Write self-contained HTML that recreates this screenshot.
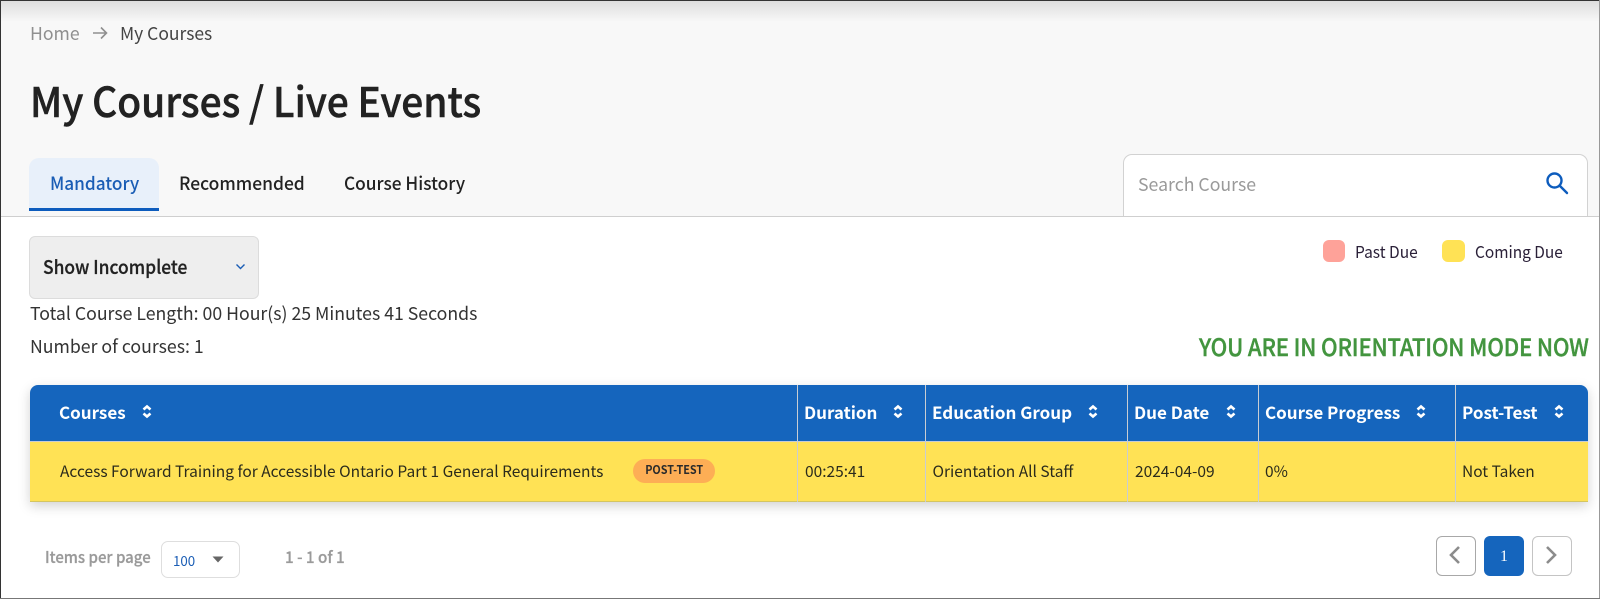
<!DOCTYPE html>
<html><head><meta charset="utf-8">
<style>
html,body{margin:0;padding:0;width:1600px;height:599px;overflow:hidden;background:#fff}
body{position:relative;font-family:"Noto Sans CJK JP","Liberation Sans",sans-serif;color:#222}
.a{position:absolute;white-space:nowrap}
.t{position:absolute;white-space:nowrap;line-height:24px;height:24px;transform-origin:0 50%}
.h{font-weight:700;font-size:17px;color:#fff}
.r{font-size:15.5px;color:#2b2b1c}
.d{position:absolute;width:1px;background:#c9cdd2}
svg{position:absolute;display:block}
</style></head><body>
<div class="a" style="left:0;top:0;width:1600px;height:216px;background:#f8f8f8"></div>
<div class="a" style="left:0;top:0;width:1600px;height:22px;background:linear-gradient(#dcdcdc,#f8f8f8)"></div>

<div class="t" style="left:30px;top:21px;font-size:18px;color:#8f8f8f;transform:scaleX(.98)">Home</div>
<svg style="left:92px;top:26px" width="16" height="14" viewBox="0 0 16 14" fill="none" stroke="#8f8f8f" stroke-width="1.6"><path d="M1 7H14.5M9 1.5L14.5 7L9 12.5"/></svg>
<div class="t" style="left:120px;top:21px;font-size:18px;color:#444;transform:scaleX(.97)">My Courses</div>
<div class="t" style="left:30px;top:69px;height:60px;line-height:60px;font-size:41px;font-weight:500;color:#222;-webkit-text-stroke:.5px #222;transform:scaleX(.948)">My Courses / Live Events</div>

<div class="a" style="left:29px;top:158px;width:130px;height:50px;background:#e8f0fa;border-radius:10px 10px 0 0"></div>
<div class="a" style="left:29px;top:208px;width:130px;height:3px;background:#0d5cbd"></div>
<div class="t" style="left:50px;top:171px;font-size:18px;font-weight:500;color:#1a5db5;transform:scaleX(.956)">Mandatory</div>
<div class="t" style="left:178.500px;top:171px;font-size:18px;font-weight:500;color:#222;transform:scaleX(.968)">Recommended</div>
<div class="t" style="left:343.500px;top:171px;font-size:18px;font-weight:500;color:#222;transform:scaleX(.96)">Course History</div>

<div class="a" style="left:1123px;top:154px;width:463px;height:62px;box-sizing:content-box;background:#fff;border:1px solid #d2d2d2;border-bottom:0;border-radius:9px 9px 0 0"></div>
<div class="t" style="left:1138px;top:172px;font-size:18px;color:#9a9a9a;transform:scaleX(.983)">Search Course</div>
<svg style="left:1544px;top:171px" width="26" height="24" viewBox="0 0 26 24" fill="none" stroke="#0d5cbd" stroke-width="2.4"><circle cx="10.5" cy="9.5" r="7"/><path d="M15.5 14.5L23 22" stroke-linecap="round"/></svg>
<div class="a" style="left:0;top:216px;width:1600px;height:1px;background:#cfcfcf"></div>

<div class="a" style="left:29px;top:236px;width:230px;height:63px;box-sizing:border-box;background:#eeeeee;border:1px solid #dcdcdc;border-radius:6px"></div>
<div class="t" style="left:43px;top:255px;font-size:19px;font-weight:500;color:#222;-webkit-text-stroke:.25px #222;transform:scaleX(.915)">Show Incomplete</div>
<svg style="left:235px;top:263px" width="11" height="8" viewBox="0 0 11 8" fill="none" stroke="#1a5db5" stroke-width="1.4"><path d="M1.500 1.500L5.500 5.500L9.500 1.500"/></svg>

<div class="a" style="left:1323px;top:240px;width:22px;height:22px;background:#fea299;border-radius:6px"></div>
<div class="t" style="left:1355px;top:239px;font-size:16.5px;color:#2a2038;transform:scaleX(.94)">Past Due</div>
<div class="a" style="left:1442px;top:240px;width:23px;height:22px;background:#ffe255;border-radius:6px"></div>
<div class="t" style="left:1475px;top:239px;font-size:16.5px;color:#2a2038;transform:scaleX(.935)">Coming Due</div>

<div class="t" style="left:30px;top:301px;font-size:18px;color:#333;transform:scaleX(.982)">Total Course Length: 00 Hour(s) 25 Minutes 41 Seconds</div>
<div class="t" style="left:30px;top:334px;font-size:18px;color:#333;transform:scaleX(.982)">Number of courses: 1</div>
<div class="t" style="left:1199px;top:334px;font-size:24px;font-weight:500;color:#43953f;-webkit-text-stroke:.4px #43953f;letter-spacing:-.2px;transform:scaleX(.92)">YOU ARE IN ORIENTATION MODE NOW</div>

<div class="a" style="left:30px;top:385px;width:1558px;height:117px;border-radius:8px 8px 0 0;box-shadow:0 4px 12px rgba(0,0,0,.18)"></div>
<div class="a" style="left:30px;top:385px;width:1558px;height:56px;background:#1565bd;border-radius:8px 8px 0 0"></div>
<div class="a" style="left:30px;top:441px;width:1558px;height:61px;background:#ffe255;border-top:1px solid #c9cdd2;box-sizing:border-box"></div>
<div class="a" style="left:30px;top:501px;width:1558px;height:1px;background:#d4c560"></div>
<div class="d" style="left:797px;top:385px;height:117px"></div>
<div class="d" style="left:925px;top:385px;height:117px"></div>
<div class="d" style="left:1127px;top:385px;height:117px"></div>
<div class="d" style="left:1258px;top:385px;height:117px"></div>
<div class="d" style="left:1455px;top:385px;height:117px"></div>

<div class="t h" style="left:59px;top:400px">Courses</div>
<svg style="left:142px;top:404px" width="10" height="15" viewBox="0 0 10 15" fill="none" stroke="#fff" stroke-width="2.6"><path d="M1.500 5.500L5 2.500L8.500 5.500M1.500 9.500L5 12.500L8.500 9.500"/></svg>
<div class="t h" style="left:804px;top:400px">Duration</div>
<svg style="left:893px;top:404px" width="10" height="15" viewBox="0 0 10 15" fill="none" stroke="#fff" stroke-width="2.6"><path d="M1.500 5.500L5 2.500L8.500 5.500M1.500 9.500L5 12.500L8.500 9.500"/></svg>
<div class="t h" style="left:932px;top:400px">Education Group</div>
<svg style="left:1088px;top:404px" width="10" height="15" viewBox="0 0 10 15" fill="none" stroke="#fff" stroke-width="2.6"><path d="M1.500 5.500L5 2.500L8.500 5.500M1.500 9.500L5 12.500L8.500 9.500"/></svg>
<div class="t h" style="left:1134px;top:400px">Due Date</div>
<svg style="left:1226px;top:404px" width="10" height="15" viewBox="0 0 10 15" fill="none" stroke="#fff" stroke-width="2.6"><path d="M1.500 5.500L5 2.500L8.500 5.500M1.500 9.500L5 12.500L8.500 9.500"/></svg>
<div class="t h" style="left:1265px;top:400px">Course Progress</div>
<svg style="left:1416px;top:404px" width="10" height="15" viewBox="0 0 10 15" fill="none" stroke="#fff" stroke-width="2.6"><path d="M1.500 5.500L5 2.500L8.500 5.500M1.500 9.500L5 12.500L8.500 9.500"/></svg>
<div class="t h" style="left:1462px;top:400px">Post-Test</div>
<svg style="left:1554px;top:404px" width="10" height="15" viewBox="0 0 10 15" fill="none" stroke="#fff" stroke-width="2.6"><path d="M1.500 5.500L5 2.500L8.500 5.500M1.500 9.500L5 12.500L8.500 9.500"/></svg>

<div class="t r" style="left:60px;top:459px">Access Forward Training for Accessible Ontario Part 1 General Requirements</div>
<div class="a" style="left:633px;top:459px;width:82px;height:24px;background:#fdae55;border-radius:12px;text-align:center;line-height:22px;font-size:12px;font-weight:700;color:#2b2b2b"><span style="display:inline-block;transform:scaleX(.9)">POST-TEST</span></div>
<div class="t r" style="left:805px;top:459px">00:25:41</div>
<div class="t r" style="left:932.500px;top:459px">Orientation All Staff</div>
<div class="t r" style="left:1135px;top:459px">2024-04-09</div>
<div class="t r" style="left:1265px;top:459px">0%</div>
<div class="t r" style="left:1462px;top:459px">Not Taken</div>

<div class="t" style="left:45px;top:544px;font-size:16px;font-weight:500;color:#9a9a9a;-webkit-text-stroke:.25px #9a9a9a;transform:scaleX(.937)">Items per page</div>
<div class="a" style="left:161px;top:541px;width:79px;height:37px;box-sizing:border-box;background:#fff;border:1px solid #dedede;border-radius:7px"></div>
<div class="t" style="left:172.500px;top:549px;font-size:14px;color:#1a5db5;transform:scaleX(.95)">100</div>
<svg style="left:212px;top:556px" width="12" height="7" viewBox="0 0 12 7"><path d="M0.500 0.500H11.500L6 6.500Z" fill="#666"/></svg>
<div class="t" style="left:285px;top:544px;font-size:16px;font-weight:500;color:#9a9a9a;-webkit-text-stroke:.25px #9a9a9a;transform:scaleX(.95)">1 - 1 of 1</div>

<div class="a" style="left:1436px;top:536px;width:40px;height:40px;box-sizing:border-box;background:#fff;border:1.500px solid #a8a8a8;border-radius:6px"></div>
<svg style="left:1447px;top:545px" width="16" height="20" viewBox="0 0 16 20" fill="none" stroke="#8c8c8c" stroke-width="2.600"><path d="M12 2L4 10L12 18"/></svg>
<div class="a" style="left:1484px;top:536px;width:40px;height:40px;background:#1565bd;border-radius:6px;color:#fff;text-align:center;line-height:42px;font-size:16px;font-family:'Liberation Serif',serif">1</div>
<div class="a" style="left:1532px;top:536px;width:40px;height:40px;box-sizing:border-box;background:#fff;border:1.500px solid #c4c4c4;border-radius:6px"></div>
<svg style="left:1543px;top:545px" width="16" height="20" viewBox="0 0 16 20" fill="none" stroke="#8c8c8c" stroke-width="2.600"><path d="M4 2L12 10L4 18"/></svg>

<div class="a" style="left:0;top:0;width:1600px;height:1px;background:#333"></div>
<div class="a" style="left:0;top:0;width:1px;height:599px;background:#333"></div>
<div class="a" style="left:1599px;top:0;width:1px;height:599px;background:#999"></div>
<div class="a" style="left:0;top:598px;width:1600px;height:1px;background:#777"></div>
</body></html>
